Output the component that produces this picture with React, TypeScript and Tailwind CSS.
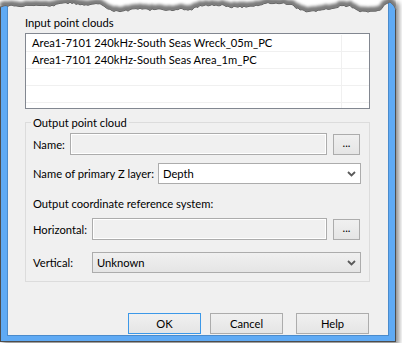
import React from "react";

const ctrl: [number, number][] = [
  [0, 7], [8, 6], [15, 5], [22, 6], [30, 5], [40, 6], [50, 6], [60, 4], [70, 3], [80, 4], [90, 5], [100, 4],
  [110, 10], [120, 12], [130, 10], [140, 9], [150, 10], [160, 9], [170, 10], [180, 9], [190, 10], [200, 6],
  [210, 5], [220, 5], [230, 7], [240, 7], [250, 6], [260, 5], [270, 3], [280, 3], [290, 4], [300, 10],
  [310, 12], [320, 10], [330, 9], [340, 6], [350, 6], [360, 11], [370, 12], [380, 10], [385, 5], [389, 2],
  [393, 4], [396, 10],
];

function interp(x: number) {
  for (let i = 0; i < ctrl.length - 1; i++) {
    const [x0, y0] = ctrl[i];
    const [x1, y1] = ctrl[i + 1];
    if (x >= x0 && x <= x1) return y0 + ((y1 - y0) * (x - x0)) / (x1 - x0);
  }
  return ctrl[ctrl.length - 1][1];
}
function jit(x: number) {
  const v = Math.sin(x * 12.9898 + 3.1) * 43758.5453;
  return (v - Math.floor(v) - 0.5) * 1.8;
}
const pts: [number, number][] = [];
for (let x = 0; x <= 396; x += 2) pts.push([x, interp(x) + (x > 0 && x < 396 ? jit(x) : 0)]);
const linePath = "M" + pts.map(([x, y]) => `${x},${y.toFixed(2)}`).join(" L");
const abovePath =
  "M-5,-5 L396,-5 " +
  pts
    .slice()
    .reverse()
    .map(([x, y]) => `L${x},${y.toFixed(2)}`)
    .join(" ") +
  " L-5,7 Z";

function TornEdge() {
  return (
    <svg width={402} height={24} className="absolute left-0 top-0" viewBox="0 0 402 24">
      <defs>
        <clipPath id="above">
          <path d={abovePath} />
        </clipPath>
        <filter id="blur" x="-10%" y="-200%" width="120%" height="500%">
          <feGaussianBlur stdDeviation="1.6" />
        </filter>
      </defs>
      <path d={abovePath} fill="#ffffff" />
      <g clipPath="url(#above)">
        <path d={linePath} stroke="#7a7a7a" strokeWidth={6} fill="none" filter="url(#blur)" transform="translate(0,-1.5)" />
      </g>
      <path d={linePath} stroke="#666666" strokeWidth={1} fill="none" />
    </svg>
  );
}

function Chevron() {
  return (
    <svg width="9" height="6" viewBox="0 0 9 6" className="shrink-0">
      <path d="M1 1 L4.5 4.5 L8 1" stroke="#5a5a5a" strokeWidth="1.8" fill="none" />
    </svg>
  );
}

function DotsButton() {
  return (
    <div className="ml-[6px] flex h-[21px] w-[27px] shrink-0 items-center justify-center border border-[#acacac] bg-gradient-to-b from-[#f0f0f0] to-[#e5e5e5] pb-[2px] leading-none text-black">
      ...
    </div>
  );
}

const rows = [
  "Area1-7101 240kHz-South Seas Wreck_05m_PC",
  "Area1-7101 240kHz-South Seas Area_1m_PC",
  "",
  "",
];

const btn =
  "flex h-[21px] w-[73px] items-center justify-center border bg-gradient-to-b from-[#f0f0f0] to-[#e5e5e5] leading-[15px]";

export default function App() {
  return (
    <div className="relative h-[343px] w-[402px] overflow-hidden whitespace-nowrap bg-white font-['Lato','Noto_Sans',sans-serif] text-[11.2px] text-black">
      <div className="h-[342px] w-[396px] border-x border-b border-[#4d4d4d] bg-[#5faaf4] px-[6px] pb-[5px] shadow-[3px_3px_5px_rgba(0,0,0,0.45)]">
        <div className="flex h-full flex-col border-x border-b border-[#4a8bcc] bg-[#f0f0f0] pl-[17px] pr-[18px] pt-[15px]">
          <div className="h-[15px] leading-[15px]">Input point clouds</div>
          <div className="mt-[3px] h-[76px] shrink-0 border border-[#828790] bg-white">
            <div className="h-[1px]" />
            {rows.map((r, i) => (
              <div key={i} className="flex h-[17px] border-b border-[#f0f0f0]">
                <div className="w-[316px] border-r border-[#f0f0f0] pl-[6px] leading-[16px]">{r}</div>
                <div className="flex-1" />
              </div>
            ))}
            <div className="flex h-[5px]">
              <div className="w-[316px] border-r border-[#f0f0f0]" />
            </div>
          </div>

          <fieldset className="mt-[6px] shrink-0 border border-[#dcdcdc] pb-[8px] pl-[7px]">
            <legend className="ml-[-2px] px-[2px] leading-[15px]">Output point cloud</legend>
            <div className="mt-[3px] flex items-center">
              <div className="w-[37px] shrink-0 leading-[15px]">Name:</div>
              <div className="h-[22px] w-[257px] shrink-0 border border-[#acacac] bg-[#f0f0f0] shadow-[inset_0_0_0_1px_#ffffff]" />
              <DotsButton />
            </div>
            <div className="mt-[8px] flex items-center">
              <div className="w-[125px] shrink-0 leading-[15px]">Name of primary Z layer:</div>
              <div className="flex h-[21px] w-[203px] shrink-0 items-center justify-between border border-[#acacac] bg-white pl-[4px] pr-[4px]">
                <span className="leading-[15px]">Depth</span>
                <Chevron />
              </div>
            </div>
            <div className="mt-[12px] leading-[15px]">Output coordinate reference system:</div>
            <div className="mt-[7px] flex items-center">
              <div className="w-[59px] shrink-0 leading-[15px]">Horizontal:</div>
              <div className="h-[22px] w-[235px] shrink-0 border border-[#acacac] bg-[#f0f0f0] shadow-[inset_0_0_0_1px_#ffffff]" />
              <DotsButton />
            </div>
            <div className="mt-[12px] flex items-center">
              <div className="w-[59px] shrink-0 leading-[15px]">Vertical:</div>
              <div className="flex h-[21px] w-[269px] shrink-0 items-center justify-between border border-[#acacac] bg-gradient-to-b from-[#f0f0f0] to-[#e5e5e5] pl-[4px] pr-[4px]">
                <span className="leading-[15px]">Unknown</span>
                <Chevron />
              </div>
            </div>
          </fieldset>

          <div className="ml-[103px] mt-[31px] flex">
            <div className={`${btn} border-[#3c98e8]`}>OK</div>
            <div className={`${btn} ml-[9px] border-[#acacac]`}>Cancel</div>
            <div className={`${btn} ml-[13px] border-[#acacac]`}>Help</div>
          </div>
        </div>
      </div>
      <TornEdge />
    </div>
  );
}
